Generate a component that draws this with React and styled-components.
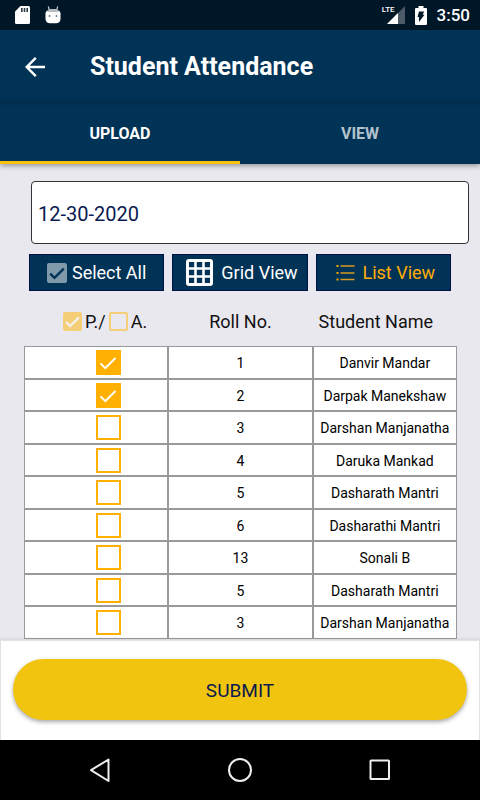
import React, { useState } from 'react';
import styled, { createGlobalStyle, css } from 'styled-components';

const STUDENTS = [
  { roll: 1, name: 'Danvir Mandar' },
  { roll: 2, name: 'Darpak Manekshaw' },
  { roll: 3, name: 'Darshan Manjanatha' },
  { roll: 4, name: 'Daruka Mankad' },
  { roll: 5, name: 'Dasharath Mantri' },
  { roll: 6, name: 'Dasharathi Mantri' },
  { roll: 13, name: 'Sonali B' },
  { roll: 5, name: 'Dasharath Mantri' },
  { roll: 3, name: 'Darshan Manjanatha' },
];

function App() {
  const [tab, setTab] = useState('upload');
  const [view, setView] = useState('list');
  const [date, setDate] = useState('12-30-2020');
  const [present, setPresent] = useState([0, 1]);

  const toggle = index => {
    setPresent(
      present.includes(index)
        ? present.filter(item => item !== index)
        : [...present, index]
    );
  };

  const toggleAll = () => {
    setPresent(
      present.length === STUDENTS.length ? [] : STUDENTS.map((_, i) => i)
    );
  };

  return (
    <Screen>
      <GlobalStyle />
      <StatusBar>
        <StatusGroup>
          <SdCardIcon />
          <AndroidIcon />
        </StatusGroup>
        <StatusGroup $end>
          <Signal>
            <SignalIcon />
            <SignalType>LTE</SignalType>
          </Signal>
          <BatteryIcon />
          <Clock>3:50</Clock>
        </StatusGroup>
      </StatusBar>

      <Header>
        <BackBtn type="button" aria-label="Back">
          <BackIcon />
        </BackBtn>
        <Title>Student Attendance</Title>
      </Header>

      <TabBar>
        <TabBtn
          type="button"
          $active={tab === 'upload'}
          onClick={() => setTab('upload')}
        >
          UPLOAD
        </TabBtn>
        <TabBtn
          type="button"
          $active={tab === 'view'}
          onClick={() => setTab('view')}
        >
          VIEW
        </TabBtn>
      </TabBar>

      <Content>
        <DateInput
          type="text"
          aria-label="Date"
          value={date}
          onChange={e => setDate(e.target.value)}
        />
        <Actions>
          <SelectAll>
            <CheckMark
              tone="muted"
              checked={present.length > 0}
              onChange={toggleAll}
            />
            Select All
          </SelectAll>
          <ViewBtn
            type="button"
            $active={view === 'grid'}
            onClick={() => setView('grid')}
          >
            <GridIcon />
            Grid View
          </ViewBtn>
          <ViewBtn
            type="button"
            $active={view === 'list'}
            onClick={() => setView('list')}
          >
            <ListIcon />
            List View
          </ViewBtn>
        </Actions>

        <TableSection>
          <Table>
            <thead>
              <tr>
                <HeadCell>
                  <Legend>
                    <CheckMark tone="pale" checked disabled label="Present" />
                    P./
                    <CheckMark
                      tone="pale"
                      checked={false}
                      disabled
                      label="Absent"
                    />
                    A.
                  </Legend>
                </HeadCell>
                <HeadCell>Roll No.</HeadCell>
                <HeadCell $name>Student Name</HeadCell>
              </tr>
            </thead>
            <tbody>
              {STUDENTS.map((student, index) => (
                <Row key={index}>
                  <CheckCell>
                    <CheckMark
                      tone="strong"
                      checked={present.includes(index)}
                      onChange={() => toggle(index)}
                      label={`${student.name} present`}
                    />
                  </CheckCell>
                  <Cell>{student.roll}</Cell>
                  <Cell>{student.name}</Cell>
                </Row>
              ))}
            </tbody>
          </Table>
        </TableSection>
      </Content>

      <Footer>
        <SubmitBtn type="button">SUBMIT</SubmitBtn>
      </Footer>

      <NavBar>
        <NavBtn type="button" aria-label="System back">
          <svg width="24" height="26" viewBox="0 0 24 26">
            <path
              d="M20.5 2.5v21.5L3 13.2z"
              fill="none"
              stroke="#eee"
              strokeWidth="2"
              strokeLinejoin="round"
            />
          </svg>
        </NavBtn>
        <NavBtn type="button" aria-label="Home">
          <svg width="26" height="26" viewBox="0 0 26 26">
            <circle
              cx="13"
              cy="13"
              r="11"
              fill="none"
              stroke="#eee"
              strokeWidth="2"
            />
          </svg>
        </NavBtn>
        <NavBtn type="button" aria-label="Recent apps">
          <svg width="22" height="22" viewBox="0 0 22 22">
            <rect
              x="1.5"
              y="1.5"
              width="18.5"
              height="18.5"
              rx="0.6"
              fill="none"
              stroke="#eee"
              strokeWidth="2"
            />
          </svg>
        </NavBtn>
      </NavBar>
    </Screen>
  );
}

export default App;

function CheckMark({ tone, checked, onChange, disabled, label }) {
  return (
    <CheckWrap>
      <Checkbox
        type="checkbox"
        $tone={tone}
        checked={checked}
        onChange={onChange}
        disabled={disabled}
        aria-label={label}
      />
      {checked && (
        <Tick viewBox="0 0 25 25" $tone={tone}>
          <path
            d={
              tone === 'strong'
                ? 'M4.5 13.4l4.8 4.8L19.5 8'
                : 'M4 13.2l5.4 5.4L21 7'
            }
          />
        </Tick>
      )}
    </CheckWrap>
  );
}

function SdCardIcon() {
  return (
    <svg width="15" height="18" viewBox="0 0 15 18">
      <path
        d="M5.5 0h8Q15 0 15 1.5v15q0 1.5-1.5 1.5h-12Q0 18 0 16.5v-11z"
        fill="#fff"
      />
      <path d="M6 2h1.6v4H6zM8.7 2h1.6v4H8.7zM11.4 2H13v4h-1.6z" fill="#2b3a47" />
    </svg>
  );
}

function AndroidIcon() {
  return (
    <svg width="16" height="18" viewBox="0 0 16 18">
      <path
        d="M3.3 0.5l1 3.5M12.7 0.5l-1 3.5"
        stroke="#c3c9ce"
        strokeWidth="1.2"
      />
      <path
        d="M0.5 7Q1 4.5 3.5 4.3h9Q15 4.5 15.5 7v6q-.5 4.3-4.5 4.3H5Q1 17.3 0.5 13z"
        fill="#fff"
      />
      <path d="M2.5 6Q3 3 5 3h6q2 0 2.5 3z" fill="#b4bcc2" />
      <circle cx="4.5" cy="10" r="1" fill="#6d7880" />
      <circle cx="11.5" cy="10" r="1" fill="#6d7880" />
    </svg>
  );
}

function SignalIcon() {
  return (
    <svg width="18" height="18" viewBox="0 0 18 18">
      <path d="M18 0v18H0z" fill="#4d5b68" />
      <path d="M11 7v11H0z" fill="#fff" />
    </svg>
  );
}

function BatteryIcon() {
  return (
    <svg width="12" height="19" viewBox="0 0 12 19">
      <path
        d="M3.5 0h5v2H11q1 0 1 1v15q0 1-1 1H1q-1 0-1-1V3q0-1 1-1h2.5z"
        fill="#fff"
      />
      <path d="M4 5.5h5L7.8 8.8h1.7L4 16v-5H2.5z" fill="#001727" />
    </svg>
  );
}

function BackIcon() {
  return (
    <svg width="20" height="20" viewBox="0 0 20 20">
      <path
        d="M20 10H2M10.8 0.9L1.7 10l9.1 9.1"
        fill="none"
        stroke="#fff"
        strokeWidth="2.4"
      />
    </svg>
  );
}

function GridIcon() {
  return (
    <svg width="27" height="27" viewBox="0 0 27 27">
      <rect
        x="1.5"
        y="1.5"
        width="24"
        height="24"
        rx="1.5"
        fill="none"
        stroke="#fff"
        strokeWidth="3"
      />
      <path
        d="M9.5 1v25M17.5 1v25M1 9.5h25M1 17.5h25"
        stroke="#fff"
        strokeWidth="2.6"
      />
    </svg>
  );
}

function ListIcon() {
  return (
    <svg width="19" height="17" viewBox="0 0 19 17">
      <path
        d="M4.5 2h14M4.5 9h14M4.5 15.5h14"
        stroke="#d99a20"
        strokeWidth="1.4"
      />
      <path
        d="M0.5 1h2v2h-2zM0.5 8h2v2h-2zM0.5 14.5h2v2h-2z"
        fill="#ffa800"
      />
    </svg>
  );
}

const GlobalStyle = createGlobalStyle`
  * {
    box-sizing: border-box;
  }

  body {
    margin: 0;
    font-family: Roboto, "Liberation Sans", sans-serif;
  }

  button, input {
    font-family: inherit;
  }

  svg {
    display: block;
    flex-shrink: 0;
  }
`;

const resetBtn = css`
  padding: 0;
  border: none;
  background: none;
  cursor: pointer;
`;

const Screen = styled.div`
  display: flex;
  flex-direction: column;
  height: 100vh;
  background: #e9e8ee;
`;

const StatusBar = styled.div`
  display: flex;
  flex-shrink: 0;
  justify-content: space-between;
  height: 30px;
  padding: 0 10px 0 15px;
  background: #001727;
`;

const StatusGroup = styled.div`
  display: flex;
  align-items: center;
  gap: ${({ $end }) => ($end ? '10px' : '15px')};
`;

const Signal = styled.div`
  position: relative;
`;

const SignalType = styled.span`
  position: absolute;
  top: 0;
  right: 10px;
  color: #fff;
  font-size: 8px;
  font-weight: 500;
  line-height: 8px;
`;

const Clock = styled.span`
  color: #fff;
  font-size: 17px;
  font-weight: 500;
`;

const Header = styled.header`
  display: flex;
  flex-shrink: 0;
  align-items: center;
  gap: 45px;
  height: 71px;
  padding: 2px 25px 0;
  background: #013356;
`;

const BackBtn = styled.button`
  ${resetBtn}
`;

const Title = styled.h1`
  margin: 0;
  color: #fff;
  font-size: 25px;
  font-weight: 700;
  line-height: 32px;
`;

const TabBar = styled.nav`
  display: flex;
  flex-shrink: 0;
  position: relative;
  height: 63px;
  background: linear-gradient(#012c49, #013356 6px);
  box-shadow: 0 2px 5px rgba(0, 0, 0, 0.35);
`;

const TabBtn = styled.button`
  ${resetBtn}
  flex: 1;
  padding-top: 4px;
  border-bottom: 3px solid ${({ $active }) => ($active ? '#f9c20a' : 'transparent')};
  color: ${({ $active }) => ($active ? '#fff' : '#b3c2cc')};
  font-size: 16px;
  font-weight: 700;
`;

const Content = styled.main`
  display: flex;
  flex: 1;
  flex-direction: column;
  min-height: 0;
  padding-top: 17px;
  overflow: hidden auto;
  scrollbar-width: none;
`;

const DateInput = styled.input`
  flex-shrink: 0;
  height: 63px;
  margin: 0 11px 10px 31px;
  padding: 3px 6px 0;
  border: 1px solid #333;
  border-radius: 4px;
  background: #fff;
  color: #0a1a50;
  font-size: 20px;
`;

const Actions = styled.div`
  display: grid;
  flex-shrink: 0;
  grid-template-columns: repeat(3, 1fr);
  gap: 8px;
  padding: 0 29px;
`;

const actionStyle = css`
  display: flex;
  align-items: center;
  justify-content: center;
  height: 37px;
  border: 1px solid #041045;
  background: #013356;
  color: ${({ $active }) => ($active ? '#ffac05' : '#fff')};
  font-size: 18px;
  white-space: nowrap;
  cursor: pointer;
`;

const SelectAll = styled.label`
  ${actionStyle}
  gap: 5px;
`;

const ViewBtn = styled.button`
  ${resetBtn}
  ${actionStyle}
  gap: 8px;
  padding-left: 4px;
`;

const TableSection = styled.div`
  flex-shrink: 0;
  padding: 0 23px 0 24px;
`;

const Table = styled.table`
  width: 100%;
  border-spacing: 0;
  table-layout: fixed;
`;

const HeadCell = styled.th`
  height: 55px;
  padding: 5px ${({ $name }) => ($name ? '18px' : '0')} 0 0;
  color: #111;
  font-size: 18px;
  font-weight: 400;
  white-space: nowrap;
`;

const Legend = styled.div`
  display: flex;
  align-items: center;
  justify-content: center;
  gap: 3px;
  padding-left: 18px;
`;

const Row = styled.tr`
  height: 33px;

  &:nth-child(even) {
    height: 32px;
  }
`;

const Cell = styled.td`
  padding: 1px 0 0;
  border: 1px solid #999;
  background: #fff;
  color: #000;
  font-size: 14px;
  text-align: center;
`;

const CheckCell = styled(Cell)`
  padding: 0 0 0 24px;
`;

const CheckWrap = styled.span`
  display: inline-grid;
  place-items: center;
  vertical-align: middle;

  > * {
    grid-area: 1 / 1;
  }
`;

const checkTones = {
  strong: css`
    --size: 25px;
    --color: #ffb000;
    --tick: #fff;
    border-radius: 0;
  `,
  pale: css`
    --size: 19px;
    --color: #f5cf78;
    --tick: #f3f0ea;
    border-radius: 2px;
  `,
  muted: css`
    --size: 20px;
    --color: #8099ab;
    --tick: #013356;
    border-radius: 2px;
  `,
};

const Checkbox = styled.input`
  ${({ $tone }) => checkTones[$tone]}
  appearance: none;
  width: var(--size);
  height: var(--size);
  margin: 0;
  border: 2px solid var(--color);

  &:checked {
    background: var(--color);
  }
`;

const Tick = styled.svg`
  ${({ $tone }) => checkTones[$tone]}
  width: var(--size);
  height: var(--size);
  fill: none;
  stroke: var(--tick);
  stroke-width: ${({ $tone }) => ($tone === 'strong' ? 2 : 3)};
  pointer-events: none;
`;

const Footer = styled.footer`
  flex-shrink: 0;
  position: relative;
  padding: 18px 12px 20px;
  border: 1px solid #e2e2e4;
  border-bottom: none;
  background: #fff;
  box-shadow: 0 0 4px rgba(0, 0, 0, 0.15);
`;

const SubmitBtn = styled.button`
  ${resetBtn}
  display: block;
  width: 100%;
  height: 61px;
  padding-top: 2px;
  border-radius: 31px;
  background: #f1c40f;
  box-shadow: 0 2px 4px rgba(0, 0, 0, 0.35);
  color: #0a1a50;
  font-size: 19px;
`;

const NavBar = styled.nav`
  display: flex;
  flex-shrink: 0;
  position: relative;
  justify-content: center;
  gap: 80px;
  height: 60px;
  background: #000;
`;

const NavBtn = styled.button`
  ${resetBtn}
  display: flex;
  align-items: center;
  justify-content: center;
  width: 60px;
`;
